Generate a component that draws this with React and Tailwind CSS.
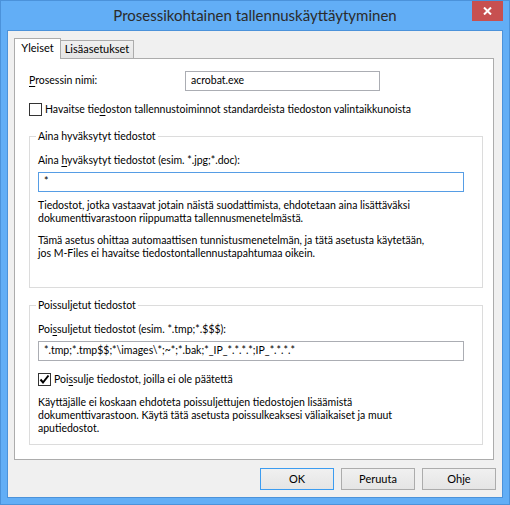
import React from 'react';

// accelerator key underline
const U = ({ children }) => <span className="underline underline-offset-[2px]">{children}</span>;

const Checkbox = ({ checked }) => (
    <span className="flex h-[13px] w-[13px] shrink-0 items-center justify-center border border-[#333333] bg-white">
        {checked && (
            <svg width="11" height="11" viewBox="0 0 11 11">
                <path d="M1.5 5.5 L4 8.5 L9.5 1.5" fill="none" stroke="#000" strokeWidth="2" />
            </svg>
        )}
    </span>
);

const Button = ({ children, primary }) => (
    <button
        className={`h-[22px] w-[74px] border bg-gradient-to-b from-[#f0f0f0] to-[#e5e5e5] text-[11px] text-black ${primary ? 'border-[#3c9cf0]' : 'border-[#acacac]'}`}
    >
        {children}
    </button>
);

const App = () => {
    return (
        <div className="flex h-[505px] w-[510px] flex-col whitespace-nowrap border border-[#4b92da] bg-[#62aef6] font-['Lato',sans-serif] text-[10.5px] text-black">
            {/* Title bar */}
            <div className="relative flex h-[29px] shrink-0 items-center justify-center">
                <span className="text-[15px] text-[#2b2b2b]">Prosessikohtainen tallennuskäyttäytyminen</span>
                <div className="absolute right-[6px] top-0 flex h-[20px] w-[31px] items-center justify-center bg-[#c75050]">
                    <svg width="9" height="8" viewBox="0 0 9 8">
                        <path d="M1 0.5 L8 7.5 M8 0.5 L1 7.5" stroke="#fff" strokeWidth="2" />
                    </svg>
                </div>
            </div>

            {/* Client area */}
            <div className="mx-[6px] mb-[6px] flex flex-1 flex-col border border-[#4b92da] bg-[#f0f0f0] px-[6px] pt-[7px]">
                {/* Tabs */}
                <div className="flex h-[20px] items-end">
                    <div className="relative z-10 -mb-px flex h-[21px] w-[47px] items-center justify-center border border-b-0 border-[#acacac] bg-white pb-[2px] text-[11px]">
                        Yleiset
                    </div>
                    <div className="flex h-[18px] w-[73px] items-center justify-center border border-b-0 border-l-0 border-[#acacac] bg-gradient-to-b from-[#f0f0f0] to-[#e5e5e5] text-[11px]">
                        Lisäasetukset
                    </div>
                </div>

                {/* Tab panel */}
                <div className="flex h-[402px] w-[480px] flex-col border border-[#acacac] bg-white pl-[14px]">
                    <div className="mt-[12px] flex h-[20px] items-center">
                        <span className="w-[156px]">
                            <U>P</U>rosessin nimi:
                        </span>
                        <div className="flex h-[20px] w-[195px] items-center border border-[#abadb3] pl-[5px]">acrobat.exe</div>
                    </div>

                    <label className="mt-[12px] flex h-[13px] items-center gap-[3px]">
                        <Checkbox />
                        <span>
                            Havaitse tie<U>d</U>oston tallennustoiminnot standardeista tiedoston valintaikkunoista
                        </span>
                    </label>

                    {/* Group: accepted files */}
                    <div className="relative mt-[20px] flex h-[152px] w-[454px] flex-col border border-[#dcdcdc] pl-[8px]">
                        <span className="absolute -top-[8px] left-[6px] bg-white px-[2px] leading-[15px]">Aina hyväksytyt tiedostot</span>
                        <div className="mt-[16px] leading-[15px]">
                            Aina <U>h</U>yväksytyt tiedostot (esim. *.jpg;*.doc):
                        </div>
                        <div className="mt-[4px] flex h-[20px] w-[426px] items-center border border-[#569de5] pl-[5px]">*</div>
                        <p className="mt-[7px] leading-[13px]">
                            Tiedostot, jotka vastaavat jotain näistä suodattimista, ehdotetaan aina lisättäväksi
                            <br />
                            dokumenttivarastoon riippumatta tallennusmenetelmästä.
                        </p>
                        <p className="mt-[9px] leading-[13px]">
                            Tämä asetus ohittaa automaattisen tunnistusmenetelmän, ja tätä asetusta käytetään,
                            <br />
                            jos M-Files ei havaitse tiedostontallennustapahtumaa oikein.
                        </p>
                    </div>

                    {/* Group: excluded files */}
                    <div className="relative mt-[17px] flex h-[140px] w-[454px] flex-col border border-[#dcdcdc] pl-[8px]">
                        <span className="absolute -top-[8px] left-[6px] bg-white px-[2px] leading-[15px]">Poissuljetut tiedostot</span>
                        <div className="mt-[16px] leading-[15px]">
                            Poi<U>s</U>suljetut tiedostot (esim. *.tmp;*.$$$):
                        </div>
                        <div className="mt-[4px] flex h-[20px] w-[426px] items-center border border-[#abadb3] pl-[5px]">
                            *.tmp;*.tmp$$;*\images\*;~*;*.bak;*_IP_*.*.*.*;IP_*.*.*.*
                        </div>
                        <label className="mt-[12px] flex h-[13px] items-center gap-[3px]">
                            <Checkbox checked />
                            <span>
                                Poi<U>s</U>sulje tiedostot, joilla ei ole päätettä
                            </span>
                        </label>
                        <p className="mt-[10px] leading-[13px]">
                            Käyttäjälle ei koskaan ehdoteta poissuljettujen tiedostojen lisäämistä
                            <br />
                            dokumenttivarastoon. Käytä tätä asetusta poissulkeaksesi väliaikaiset ja muut
                            <br />
                            aputiedostot.
                        </p>
                    </div>
                </div>

                {/* Buttons */}
                <div className="mt-[8px] flex justify-end gap-[7px]">
                    <Button primary>OK</Button>
                    <Button>Peruuta</Button>
                    <Button>Ohje</Button>
                </div>
            </div>
        </div>
    );
};

export default App;
